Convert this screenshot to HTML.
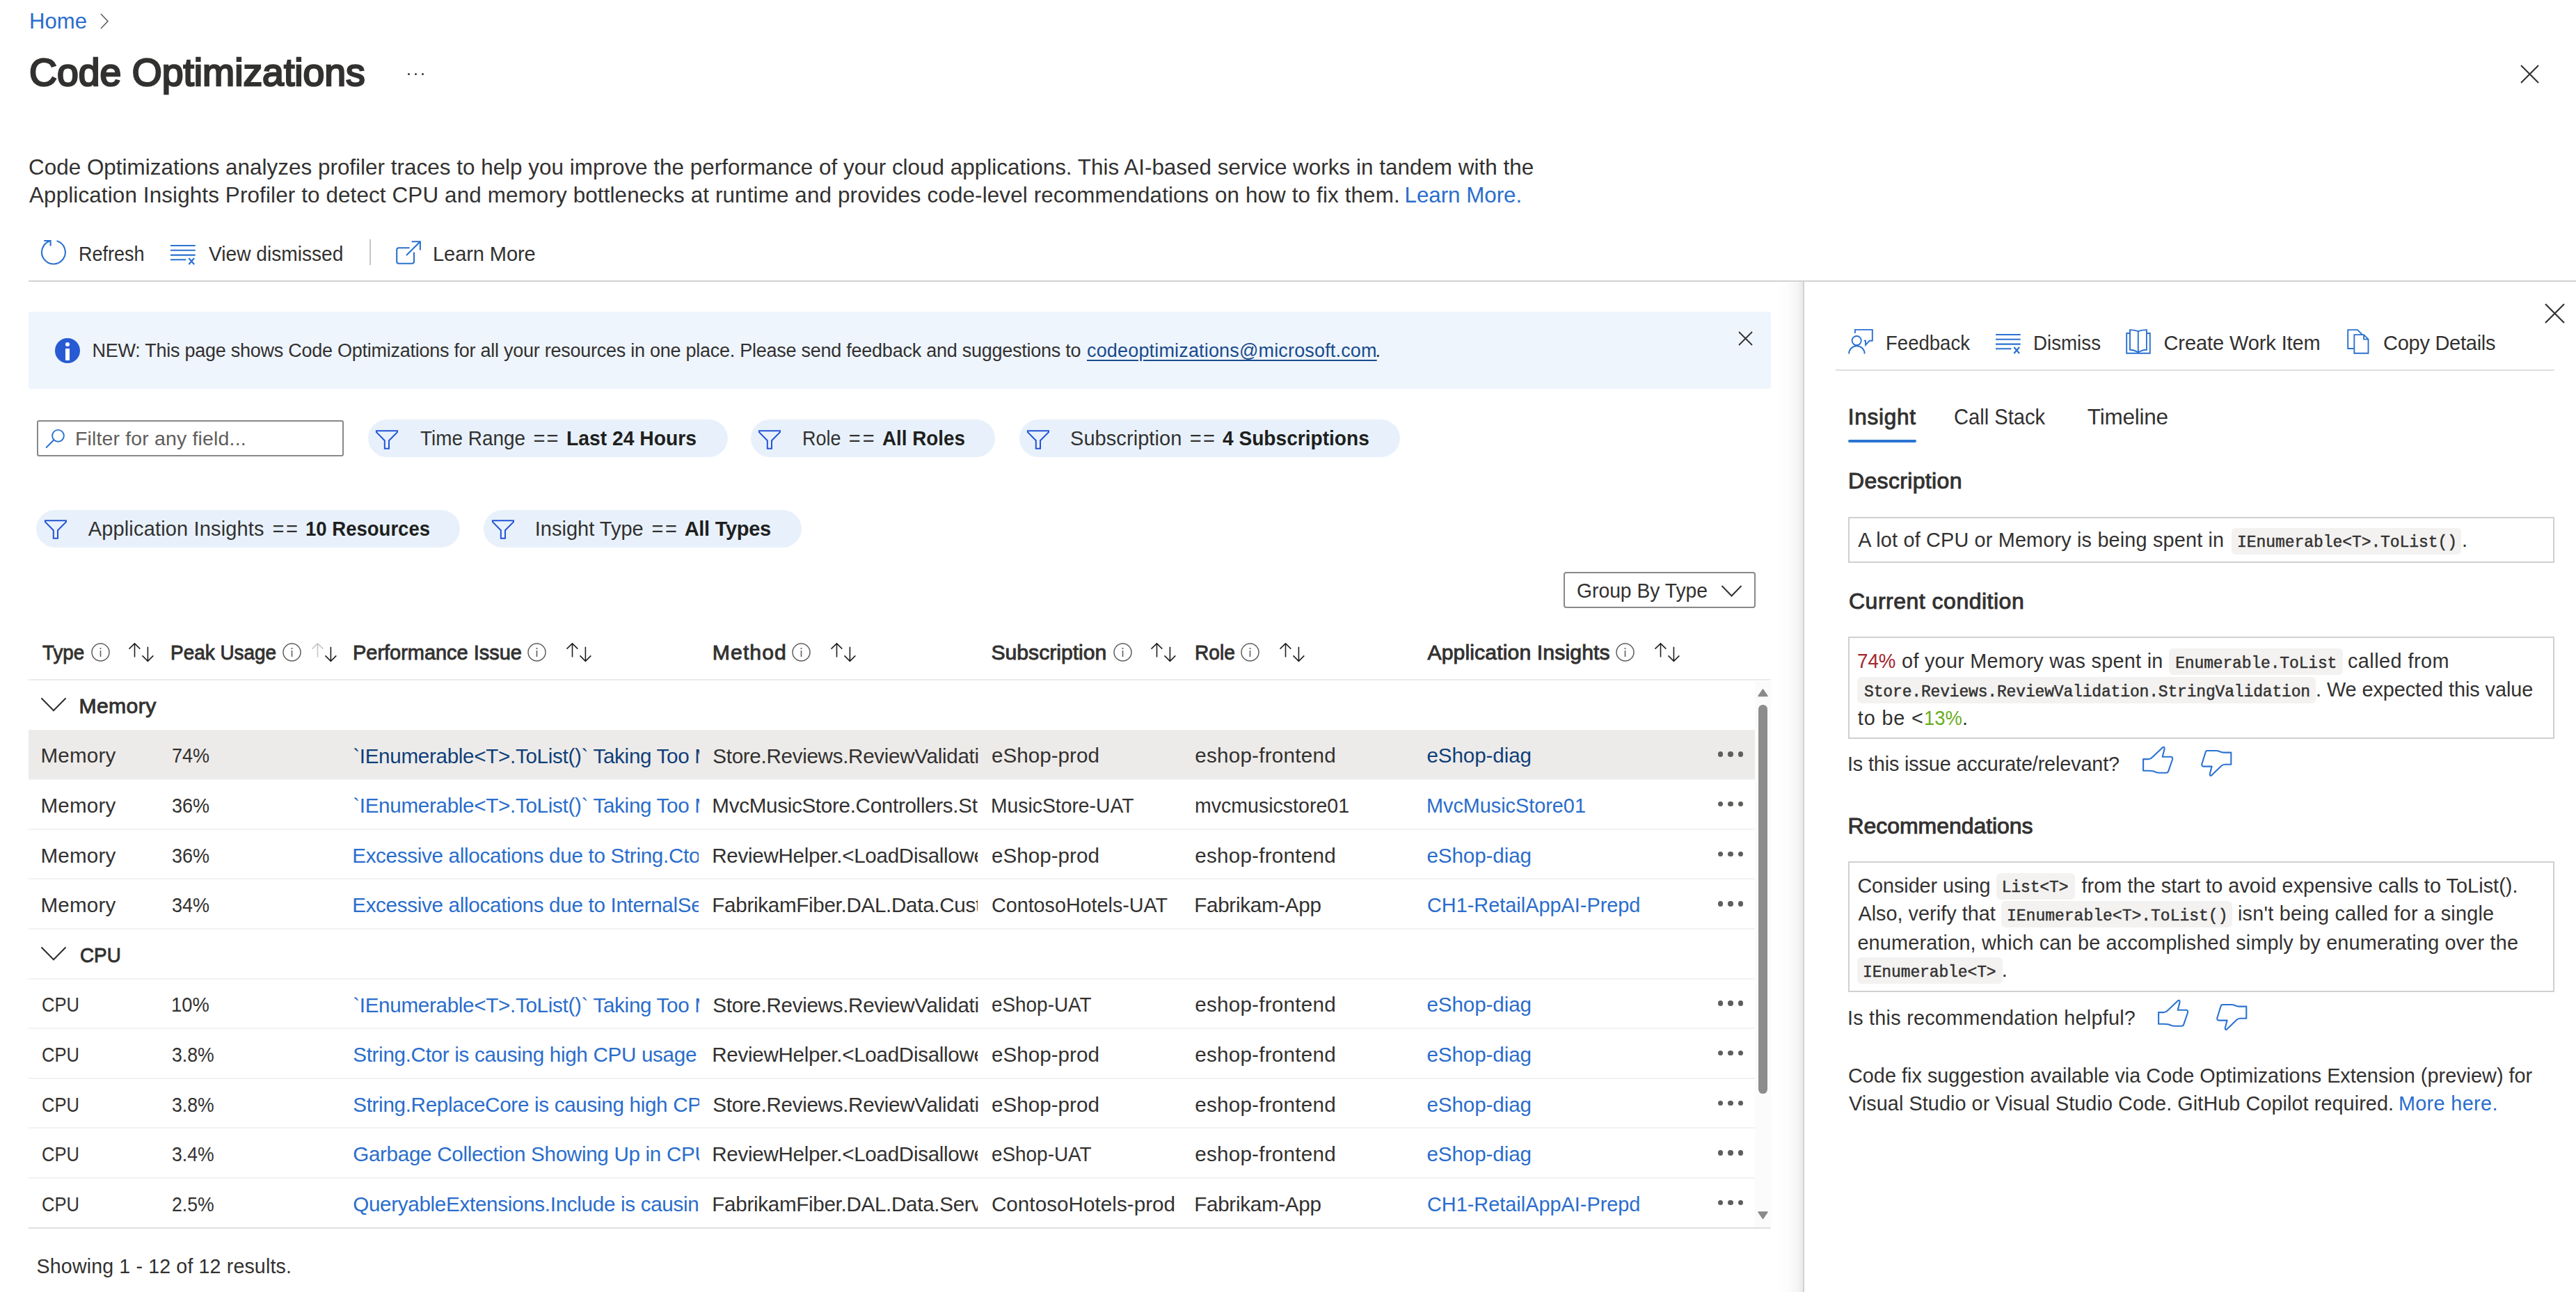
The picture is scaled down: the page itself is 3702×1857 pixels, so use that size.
<!DOCTYPE html><html><head><meta charset="utf-8"><title>Code Optimizations</title><style>
html,body{margin:0;padding:0;background:#fff;}
body{width:3702px;height:1857px;overflow:hidden;position:relative;font-family:"Liberation Sans",sans-serif;}
.t{position:absolute;white-space:pre;line-height:0;}
svg{overflow:visible}
</style></head><body>
<svg style="position:absolute;left:142.0px;top:18.0px;" width="16.0" height="25.0" viewBox="0 0 16 25" preserveAspectRatio="none"><path d="M3 2 L13 12.5 L3 23" fill="none" stroke="#605e5c" stroke-width="1.6"/></svg>
<div style="position:absolute;left:585.6px;top:104.5px;width:3.6px;height:3.6px;border-radius:50%;background:#323130"></div>
<div style="position:absolute;left:595.7px;top:104.5px;width:3.6px;height:3.6px;border-radius:50%;background:#323130"></div>
<div style="position:absolute;left:605.8px;top:104.5px;width:3.6px;height:3.6px;border-radius:50%;background:#323130"></div>
<svg style="position:absolute;left:3620.0px;top:91.0px;" width="31.0" height="31.0" viewBox="0 0 31 31" preserveAspectRatio="none"><path d="M3 3 L28 28 M28 3 L3 28" stroke="#323130" stroke-width="2.1" fill="none"/></svg>
<svg style="position:absolute;left:57.0px;top:342.0px;" width="40.0" height="40.0" viewBox="0 0 40 40" preserveAspectRatio="none"><path d="M24.6 4.3 A16.9 16.9 0 1 1 14.6 4.5" fill="none" stroke="#2b72d0" stroke-width="2.1"/><path d="M6.2 4 H15.6 V11.5" fill="none" stroke="#2b72d0" stroke-width="2.1"/></svg>
<svg style="position:absolute;left:244.0px;top:349.7px;" width="39.0" height="33.0" viewBox="0 0 39 33" preserveAspectRatio="none"><path d="M1 3 H36.7 M1 9.8 H36.7 M1 16.6 H36.7 M1 23.2 H23.4" stroke="#2b72d0" stroke-width="2.1" fill="none"/><path d="M27.3 21.1 L35.1 30 M35.1 21.1 L27.3 30" stroke="#2b72d0" stroke-width="2.2" fill="none"/></svg>
<div style="position:absolute;left:531.0px;top:343.5px;width:2.0px;height:37.2px;background:#c8c6c4;"></div>
<svg style="position:absolute;left:567.0px;top:344.0px;" width="40.0" height="38.0" viewBox="0 0 40 38" preserveAspectRatio="none"><path d="M21.6 12.2 H6.2 Q3.2 12.2 3.2 15.2 V31.8 Q3.2 34.8 6.2 34.8 H25 Q28 34.8 28 31.8 V18.5" fill="none" stroke="#2b72d0" stroke-width="2.1"/><path d="M17 23 L36.6 3.4 M24.7 3.3 H36.9 V15.4" fill="none" stroke="#2b72d0" stroke-width="2.1"/></svg>
<div style="position:absolute;left:41.0px;top:403.0px;width:3661.0px;height:2.0px;background:#d2d2d2;"></div>
<div style="position:absolute;left:41.2px;top:448.0px;width:2503.8px;height:111.3px;background:#eff5fd;border-radius:4px"></div>
<div style="position:absolute;left:79px;top:486px;width:36px;height:36px;border-radius:50%;background:#285bd3"></div>
<div style="position:absolute;left:94.1px;top:501.4px;width:5.7px;height:16.4px;background:#ffffff;"></div>
<div style="position:absolute;left:93.7px;top:491.9px;width:6.6px;height:6.6px;border-radius:50%;background:#fff"></div>
<svg style="position:absolute;left:2497.0px;top:475.0px;" width="23.0" height="23.0" viewBox="0 0 23 23" preserveAspectRatio="none"><path d="M2 2 L21 21 M21 2 L2 21" stroke="#323130" stroke-width="1.8" fill="none"/></svg>
<div style="position:absolute;left:53px;top:603.5px;width:441.3px;height:52.5px;box-sizing:border-box;border:2px solid #8a8886;border-radius:3px;background:#fff"></div>
<svg style="position:absolute;left:65.0px;top:615.0px;" width="30.0" height="30.0" viewBox="0 0 30 30" preserveAspectRatio="none"><circle cx="18.5" cy="11.3" r="8.4" fill="none" stroke="#2b72d0" stroke-width="1.9"/><path d="M11.9 17.8 L1.7 28" stroke="#2b72d0" stroke-width="2.0" fill="none" stroke-linecap="round"/></svg>
<div style="position:absolute;left:529.0px;top:603.0px;width:516.8px;height:54.0px;background:#e8f1fb;border-radius:27px"></div>
<svg style="position:absolute;left:540.0px;top:617.7px;" width="32.0" height="28.5" viewBox="0 0 32 28.5" preserveAspectRatio="none"><path d="M0.9 3.2 V1.3 H31 V3.2 L19 15.2 V26.7 H12.8 V15.2 Z" fill="none" stroke="#2454d6" stroke-width="2.0" stroke-linejoin="miter"/></svg>
<div style="position:absolute;left:1079.0px;top:603.0px;width:351.4px;height:54.0px;background:#e8f1fb;border-radius:27px"></div>
<svg style="position:absolute;left:1090.0px;top:617.7px;" width="32.0" height="28.5" viewBox="0 0 32 28.5" preserveAspectRatio="none"><path d="M0.9 3.2 V1.3 H31 V3.2 L19 15.2 V26.7 H12.8 V15.2 Z" fill="none" stroke="#2454d6" stroke-width="2.0" stroke-linejoin="miter"/></svg>
<div style="position:absolute;left:1465.4px;top:603.0px;width:546.2px;height:54.0px;background:#e8f1fb;border-radius:27px"></div>
<svg style="position:absolute;left:1476.0px;top:617.7px;" width="32.0" height="28.5" viewBox="0 0 32 28.5" preserveAspectRatio="none"><path d="M0.9 3.2 V1.3 H31 V3.2 L19 15.2 V26.7 H12.8 V15.2 Z" fill="none" stroke="#2454d6" stroke-width="2.0" stroke-linejoin="miter"/></svg>
<div style="position:absolute;left:52.2px;top:732.6px;width:609.2px;height:54.0px;background:#e8f1fb;border-radius:27px"></div>
<svg style="position:absolute;left:63.8px;top:747.3px;" width="32.0" height="28.5" viewBox="0 0 32 28.5" preserveAspectRatio="none"><path d="M0.9 3.2 V1.3 H31 V3.2 L19 15.2 V26.7 H12.8 V15.2 Z" fill="none" stroke="#2454d6" stroke-width="2.0" stroke-linejoin="miter"/></svg>
<div style="position:absolute;left:695.4px;top:732.6px;width:456.4px;height:54.0px;background:#e8f1fb;border-radius:27px"></div>
<svg style="position:absolute;left:706.6px;top:747.3px;" width="32.0" height="28.5" viewBox="0 0 32 28.5" preserveAspectRatio="none"><path d="M0.9 3.2 V1.3 H31 V3.2 L19 15.2 V26.7 H12.8 V15.2 Z" fill="none" stroke="#2454d6" stroke-width="2.0" stroke-linejoin="miter"/></svg>
<div style="position:absolute;left:2246.6px;top:821.7px;width:276.7px;height:52.5px;box-sizing:border-box;border:2px solid #8a8886;border-radius:4px;background:#fff"></div>
<svg style="position:absolute;left:2473.0px;top:840.0px;" width="31.0" height="19.0" viewBox="0 0 31 19" preserveAspectRatio="none"><path d="M1.5 2 L15.5 16.5 L29.5 2" fill="none" stroke="#323130" stroke-width="2"/></svg>
<svg style="position:absolute;left:130.9px;top:924.0px;" width="27.0" height="27.0" viewBox="0 0 27 27" preserveAspectRatio="none"><circle cx="13.5" cy="13.5" r="12.5" fill="none" stroke="#605e5c" stroke-width="1.5"/><rect x="12.7" y="11" width="1.6" height="9" fill="#605e5c"/><circle cx="13.5" cy="8.1" r="1.1" fill="#605e5c"/></svg>
<svg style="position:absolute;left:184.0px;top:923.5px;" width="37.0" height="28.0" viewBox="0 0 37 28" preserveAspectRatio="none"><path d="M9.5 1 V20.4 M1.5 8.6 L9.5 0.9 L17.3 8.6" fill="none" stroke="#201f1e" stroke-width="1.6"/><path d="M28.4 5.8 V26.4 M20.5 18.4 L28.4 26.4 L36.3 18.4" fill="none" stroke="#201f1e" stroke-width="1.6"/></svg>
<svg style="position:absolute;left:406.4px;top:924.0px;" width="27.0" height="27.0" viewBox="0 0 27 27" preserveAspectRatio="none"><circle cx="13.5" cy="13.5" r="12.5" fill="none" stroke="#605e5c" stroke-width="1.5"/><rect x="12.7" y="11" width="1.6" height="9" fill="#605e5c"/><circle cx="13.5" cy="8.1" r="1.1" fill="#605e5c"/></svg>
<svg style="position:absolute;left:447.0px;top:923.5px;" width="37.0" height="28.0" viewBox="0 0 37 28" preserveAspectRatio="none"><path d="M9.5 1 V20.4 M1.5 8.6 L9.5 0.9 L17.3 8.6" fill="none" stroke="#c8c6c4" stroke-width="1.6"/><path d="M28.4 5.8 V26.4 M20.5 18.4 L28.4 26.4 L36.3 18.4" fill="none" stroke="#201f1e" stroke-width="1.6"/></svg>
<svg style="position:absolute;left:758.4px;top:924.0px;" width="27.0" height="27.0" viewBox="0 0 27 27" preserveAspectRatio="none"><circle cx="13.5" cy="13.5" r="12.5" fill="none" stroke="#605e5c" stroke-width="1.5"/><rect x="12.7" y="11" width="1.6" height="9" fill="#605e5c"/><circle cx="13.5" cy="8.1" r="1.1" fill="#605e5c"/></svg>
<svg style="position:absolute;left:813.0px;top:923.5px;" width="37.0" height="28.0" viewBox="0 0 37 28" preserveAspectRatio="none"><path d="M9.5 1 V20.4 M1.5 8.6 L9.5 0.9 L17.3 8.6" fill="none" stroke="#201f1e" stroke-width="1.6"/><path d="M28.4 5.8 V26.4 M20.5 18.4 L28.4 26.4 L36.3 18.4" fill="none" stroke="#201f1e" stroke-width="1.6"/></svg>
<svg style="position:absolute;left:1138.4px;top:924.0px;" width="27.0" height="27.0" viewBox="0 0 27 27" preserveAspectRatio="none"><circle cx="13.5" cy="13.5" r="12.5" fill="none" stroke="#605e5c" stroke-width="1.5"/><rect x="12.7" y="11" width="1.6" height="9" fill="#605e5c"/><circle cx="13.5" cy="8.1" r="1.1" fill="#605e5c"/></svg>
<svg style="position:absolute;left:1192.5px;top:923.5px;" width="37.0" height="28.0" viewBox="0 0 37 28" preserveAspectRatio="none"><path d="M9.5 1 V20.4 M1.5 8.6 L9.5 0.9 L17.3 8.6" fill="none" stroke="#201f1e" stroke-width="1.6"/><path d="M28.4 5.8 V26.4 M20.5 18.4 L28.4 26.4 L36.3 18.4" fill="none" stroke="#201f1e" stroke-width="1.6"/></svg>
<svg style="position:absolute;left:1599.9px;top:924.0px;" width="27.0" height="27.0" viewBox="0 0 27 27" preserveAspectRatio="none"><circle cx="13.5" cy="13.5" r="12.5" fill="none" stroke="#605e5c" stroke-width="1.5"/><rect x="12.7" y="11" width="1.6" height="9" fill="#605e5c"/><circle cx="13.5" cy="8.1" r="1.1" fill="#605e5c"/></svg>
<svg style="position:absolute;left:1653.0px;top:923.5px;" width="37.0" height="28.0" viewBox="0 0 37 28" preserveAspectRatio="none"><path d="M9.5 1 V20.4 M1.5 8.6 L9.5 0.9 L17.3 8.6" fill="none" stroke="#201f1e" stroke-width="1.6"/><path d="M28.4 5.8 V26.4 M20.5 18.4 L28.4 26.4 L36.3 18.4" fill="none" stroke="#201f1e" stroke-width="1.6"/></svg>
<svg style="position:absolute;left:1783.4px;top:924.0px;" width="27.0" height="27.0" viewBox="0 0 27 27" preserveAspectRatio="none"><circle cx="13.5" cy="13.5" r="12.5" fill="none" stroke="#605e5c" stroke-width="1.5"/><rect x="12.7" y="11" width="1.6" height="9" fill="#605e5c"/><circle cx="13.5" cy="8.1" r="1.1" fill="#605e5c"/></svg>
<svg style="position:absolute;left:1837.5px;top:923.5px;" width="37.0" height="28.0" viewBox="0 0 37 28" preserveAspectRatio="none"><path d="M9.5 1 V20.4 M1.5 8.6 L9.5 0.9 L17.3 8.6" fill="none" stroke="#201f1e" stroke-width="1.6"/><path d="M28.4 5.8 V26.4 M20.5 18.4 L28.4 26.4 L36.3 18.4" fill="none" stroke="#201f1e" stroke-width="1.6"/></svg>
<svg style="position:absolute;left:2322.3px;top:924.0px;" width="27.0" height="27.0" viewBox="0 0 27 27" preserveAspectRatio="none"><circle cx="13.5" cy="13.5" r="12.5" fill="none" stroke="#605e5c" stroke-width="1.5"/><rect x="12.7" y="11" width="1.6" height="9" fill="#605e5c"/><circle cx="13.5" cy="8.1" r="1.1" fill="#605e5c"/></svg>
<svg style="position:absolute;left:2376.5px;top:923.5px;" width="37.0" height="28.0" viewBox="0 0 37 28" preserveAspectRatio="none"><path d="M9.5 1 V20.4 M1.5 8.6 L9.5 0.9 L17.3 8.6" fill="none" stroke="#201f1e" stroke-width="1.6"/><path d="M28.4 5.8 V26.4 M20.5 18.4 L28.4 26.4 L36.3 18.4" fill="none" stroke="#201f1e" stroke-width="1.6"/></svg>
<div style="position:absolute;left:41.0px;top:976.0px;width:2504.0px;height:2.0px;background:#edebe9;"></div>
<svg style="position:absolute;left:58.0px;top:1002.2px;" width="38.0" height="21.4" viewBox="0 0 38 21.4" preserveAspectRatio="none"><path d="M1.5 1.5 L19 19.2 L36.5 1.5" fill="none" stroke="#323130" stroke-width="2.1"/></svg>
<div style="position:absolute;left:41.0px;top:1048.6px;width:2481.0px;height:71.6px;background:#edebe9;"></div>
<div style="position:absolute;left:2468.9px;top:1080.4px;width:7.4px;height:7.4px;border-radius:50%;background:#605e5c"></div>
<div style="position:absolute;left:2483.3px;top:1080.4px;width:7.4px;height:7.4px;border-radius:50%;background:#605e5c"></div>
<div style="position:absolute;left:2497.6px;top:1080.4px;width:7.4px;height:7.4px;border-radius:50%;background:#605e5c"></div>
<div style="position:absolute;left:41.0px;top:1119.2px;width:2481.0px;height:2.0px;background:#f3f2f1;"></div>
<div style="position:absolute;left:2468.9px;top:1152.0px;width:7.4px;height:7.4px;border-radius:50%;background:#605e5c"></div>
<div style="position:absolute;left:2483.3px;top:1152.0px;width:7.4px;height:7.4px;border-radius:50%;background:#605e5c"></div>
<div style="position:absolute;left:2497.6px;top:1152.0px;width:7.4px;height:7.4px;border-radius:50%;background:#605e5c"></div>
<div style="position:absolute;left:41.0px;top:1190.8px;width:2481.0px;height:2.0px;background:#f3f2f1;"></div>
<div style="position:absolute;left:2468.9px;top:1223.6px;width:7.4px;height:7.4px;border-radius:50%;background:#605e5c"></div>
<div style="position:absolute;left:2483.3px;top:1223.6px;width:7.4px;height:7.4px;border-radius:50%;background:#605e5c"></div>
<div style="position:absolute;left:2497.6px;top:1223.6px;width:7.4px;height:7.4px;border-radius:50%;background:#605e5c"></div>
<div style="position:absolute;left:41.0px;top:1262.4px;width:2481.0px;height:2.0px;background:#f3f2f1;"></div>
<div style="position:absolute;left:2468.9px;top:1295.2px;width:7.4px;height:7.4px;border-radius:50%;background:#605e5c"></div>
<div style="position:absolute;left:2483.3px;top:1295.2px;width:7.4px;height:7.4px;border-radius:50%;background:#605e5c"></div>
<div style="position:absolute;left:2497.6px;top:1295.2px;width:7.4px;height:7.4px;border-radius:50%;background:#605e5c"></div>
<div style="position:absolute;left:41.0px;top:1334.0px;width:2481.0px;height:2.0px;background:#f3f2f1;"></div>
<svg style="position:absolute;left:58.0px;top:1360.2px;" width="38.0" height="21.4" viewBox="0 0 38 21.4" preserveAspectRatio="none"><path d="M1.5 1.5 L19 19.2 L36.5 1.5" fill="none" stroke="#323130" stroke-width="2.1"/></svg>
<div style="position:absolute;left:41.0px;top:1405.6px;width:2481.0px;height:2.0px;background:#f3f2f1;"></div>
<div style="position:absolute;left:2468.9px;top:1438.4px;width:7.4px;height:7.4px;border-radius:50%;background:#605e5c"></div>
<div style="position:absolute;left:2483.3px;top:1438.4px;width:7.4px;height:7.4px;border-radius:50%;background:#605e5c"></div>
<div style="position:absolute;left:2497.6px;top:1438.4px;width:7.4px;height:7.4px;border-radius:50%;background:#605e5c"></div>
<div style="position:absolute;left:41.0px;top:1477.2px;width:2481.0px;height:2.0px;background:#f3f2f1;"></div>
<div style="position:absolute;left:2468.9px;top:1510.0px;width:7.4px;height:7.4px;border-radius:50%;background:#605e5c"></div>
<div style="position:absolute;left:2483.3px;top:1510.0px;width:7.4px;height:7.4px;border-radius:50%;background:#605e5c"></div>
<div style="position:absolute;left:2497.6px;top:1510.0px;width:7.4px;height:7.4px;border-radius:50%;background:#605e5c"></div>
<div style="position:absolute;left:41.0px;top:1548.8px;width:2481.0px;height:2.0px;background:#f3f2f1;"></div>
<div style="position:absolute;left:2468.9px;top:1581.6px;width:7.4px;height:7.4px;border-radius:50%;background:#605e5c"></div>
<div style="position:absolute;left:2483.3px;top:1581.6px;width:7.4px;height:7.4px;border-radius:50%;background:#605e5c"></div>
<div style="position:absolute;left:2497.6px;top:1581.6px;width:7.4px;height:7.4px;border-radius:50%;background:#605e5c"></div>
<div style="position:absolute;left:41.0px;top:1620.4px;width:2481.0px;height:2.0px;background:#f3f2f1;"></div>
<div style="position:absolute;left:2468.9px;top:1653.2px;width:7.4px;height:7.4px;border-radius:50%;background:#605e5c"></div>
<div style="position:absolute;left:2483.3px;top:1653.2px;width:7.4px;height:7.4px;border-radius:50%;background:#605e5c"></div>
<div style="position:absolute;left:2497.6px;top:1653.2px;width:7.4px;height:7.4px;border-radius:50%;background:#605e5c"></div>
<div style="position:absolute;left:41.0px;top:1692.0px;width:2481.0px;height:2.0px;background:#f3f2f1;"></div>
<div style="position:absolute;left:2468.9px;top:1724.8px;width:7.4px;height:7.4px;border-radius:50%;background:#605e5c"></div>
<div style="position:absolute;left:2483.3px;top:1724.8px;width:7.4px;height:7.4px;border-radius:50%;background:#605e5c"></div>
<div style="position:absolute;left:2497.6px;top:1724.8px;width:7.4px;height:7.4px;border-radius:50%;background:#605e5c"></div>
<div style="position:absolute;left:41.0px;top:1764.0px;width:2504.0px;height:2.0px;background:#e1dfdd;"></div>
<div style="position:absolute;left:2522.0px;top:978.5px;width:23.0px;height:785.5px;background:#fbfbfb;"></div>
<svg style="position:absolute;left:2526.0px;top:990.0px;" width="15.0" height="11.5" viewBox="0 0 15 11.5" preserveAspectRatio="none"><path d="M7.5 1 L14 10.5 H1 Z" fill="#8a8a8a" stroke="#8a8a8a" stroke-width="1.5" stroke-linejoin="round"/></svg>
<svg style="position:absolute;left:2526.0px;top:1741.0px;" width="15.0" height="11.5" viewBox="0 0 15 11.5" preserveAspectRatio="none"><path d="M7.5 10.5 L14 1 H1 Z" fill="#8a8a8a" stroke="#8a8a8a" stroke-width="1.5" stroke-linejoin="round"/></svg>
<div style="position:absolute;left:2527.2px;top:1013.0px;width:12.8px;height:558.6px;background:#8c8c8c;border-radius:6.4px"></div>
<div style="position:absolute;left:2552px;top:405px;width:39px;height:1452px;background:linear-gradient(to right, rgba(0,0,0,0) 0%, rgba(0,0,0,0.012) 45%, rgba(0,0,0,0.04) 80%, rgba(0,0,0,0.085) 100%)"></div>
<div style="position:absolute;left:2592.0px;top:405.0px;width:1110.0px;height:1452.0px;background:#ffffff;"></div>
<div style="position:absolute;left:2591.0px;top:405.0px;width:2.0px;height:1452.0px;background:#d2d2d2;"></div>
<svg style="position:absolute;left:3656.0px;top:435.0px;" width="31.0" height="31.0" viewBox="0 0 31 31" preserveAspectRatio="none"><path d="M2 2 L29 29 M29 2 L2 29" stroke="#323130" stroke-width="2.2" fill="none"/></svg>
<svg style="position:absolute;left:2655.0px;top:472.0px;" width="39.0" height="38.0" viewBox="0 0 39 38" preserveAspectRatio="none"><circle cx="13.2" cy="17.6" r="6.6" fill="none" stroke="#2b72d0" stroke-width="1.9"/><path d="M2.1 36.5 A11.3 11.3 0 0 1 24.7 36.5" fill="none" stroke="#2b72d0" stroke-width="1.9"/><path d="M10.9 7 V1.9 H35.8 V17.8 H31.7 L26 23.8 V17.6 H23.7" fill="none" stroke="#2b72d0" stroke-width="1.9"/></svg>
<svg style="position:absolute;left:2867.2px;top:477.8px;" width="39.0" height="33.0" viewBox="0 0 39 33" preserveAspectRatio="none"><path d="M1 3 H36.7 M1 9.8 H36.7 M1 16.6 H36.7 M1 23.2 H23.4" stroke="#2b72d0" stroke-width="2.1" fill="none"/><path d="M27.3 21.1 L35.1 30 M35.1 21.1 L27.3 30" stroke="#2b72d0" stroke-width="2.2" fill="none"/></svg>
<svg style="position:absolute;left:3054.0px;top:472.0px;" width="38.0" height="38.0" viewBox="0 0 38 38" preserveAspectRatio="none"><path d="M7 7 H2.2 V35.7 H35.8 V7 H30.9" fill="none" stroke="#2b72d0" stroke-width="1.9"/><path d="M7 2.1 Q13 2.1 18.8 4.2 Q24.6 2.1 30.9 2.1 V30.7 Q24.6 30.7 18.8 34.5 Q13 30.7 7 30.7 Z M18.8 4.2 V34.5" fill="none" stroke="#2b72d0" stroke-width="1.9"/></svg>
<svg style="position:absolute;left:3372.0px;top:472.0px;" width="34.0" height="38.0" viewBox="0 0 34 38" preserveAspectRatio="none"><path d="M10.5 29 H2.2 V2.1 H16 L22.8 8.9" fill="none" stroke="#2b72d0" stroke-width="1.9"/><path d="M11.3 9.1 H25.1 L31.5 15.6 V35.7 H11.3 Z M25.1 9.1 V15.6 H31.5" fill="none" stroke="#2b72d0" stroke-width="1.9"/></svg>
<div style="position:absolute;left:2638.0px;top:531.0px;width:1033.0px;height:2.0px;background:#e1dfdd;"></div>
<div style="position:absolute;left:2656.0px;top:632.2px;width:98.0px;height:4.2px;background:#2b74d2;border-radius:2px"></div>
<div style="position:absolute;left:2656px;top:742.5px;width:1015px;height:66.0px;box-sizing:border-box;border:2px solid #d2d0ce;background:#fff"></div>
<div style="position:absolute;left:3207.0px;top:758.8px;width:330.3px;height:38.0px;background:#f3f2f1;border-radius:6px"></div>
<div style="position:absolute;left:2656px;top:915px;width:1015px;height:147px;box-sizing:border-box;border:2px solid #d2d0ce;background:#fff"></div>
<div style="position:absolute;left:3117.2px;top:932.4px;width:249.4px;height:38.0px;background:#f3f2f1;border-radius:6px"></div>
<div style="position:absolute;left:2669.2px;top:973.2px;width:659.1px;height:38.0px;background:#f3f2f1;border-radius:6px"></div>
<svg style="position:absolute;left:3077.5px;top:1071.5px;" width="46.0" height="40.0" viewBox="0 0 46 40" preserveAspectRatio="none"><path d="M2.1 19.1 H9.5 Q12.5 19.1 15 16.5 L29.5 2.7 Q32.8 0.3 32.6 4.5 L29.7 15.8 H42 Q44.8 16.3 44 19.5 L38.1 36.8 Q37.2 38.8 35.3 38.8 H25 Q21.5 38.8 17 36.5 Q13 35.7 9.5 35.7 H2.1 Z" fill="none" stroke="#2b72d0" stroke-width="2.1" stroke-linejoin="round"/></svg>
<svg style="position:absolute;left:3163.0px;top:1077.0px;" width="46.0" height="40.0" viewBox="0 0 46 40" preserveAspectRatio="none"><path d="M43.3 4.6 H33 Q30 4.6 26.5 3 Q24.5 2 22 2 H9 Q7.2 2 6.5 4.5 L1.3 21.2 Q0.7 24.6 4.5 24.6 H15.6 L12.8 35.6 Q12.6 38.6 14.8 37.8 L29.7 23.5 Q32 21.8 35 21.8 H43.3 Z" fill="none" stroke="#2b72d0" stroke-width="2.1" stroke-linejoin="round"/></svg>
<div style="position:absolute;left:2656px;top:1237.6px;width:1015px;height:188.60000000000014px;box-sizing:border-box;border:2px solid #d2d0ce;background:#fff"></div>
<div style="position:absolute;left:2869.4px;top:1255.0px;width:112.2px;height:38.0px;background:#f3f2f1;border-radius:6px"></div>
<div style="position:absolute;left:2876.3px;top:1295.2px;width:331.3px;height:38.0px;background:#f3f2f1;border-radius:6px"></div>
<div style="position:absolute;left:2669.2px;top:1376.3px;width:208.5px;height:38.0px;background:#f3f2f1;border-radius:6px"></div>
<svg style="position:absolute;left:3100.2px;top:1436.1px;" width="46.0" height="40.0" viewBox="0 0 46 40" preserveAspectRatio="none"><path d="M2.1 19.1 H9.5 Q12.5 19.1 15 16.5 L29.5 2.7 Q32.8 0.3 32.6 4.5 L29.7 15.8 H42 Q44.8 16.3 44 19.5 L38.1 36.8 Q37.2 38.8 35.3 38.8 H25 Q21.5 38.8 17 36.5 Q13 35.7 9.5 35.7 H2.1 Z" fill="none" stroke="#2b72d0" stroke-width="2.1" stroke-linejoin="round"/></svg>
<svg style="position:absolute;left:3185.4px;top:1442.0px;" width="46.0" height="40.0" viewBox="0 0 46 40" preserveAspectRatio="none"><path d="M43.3 4.6 H33 Q30 4.6 26.5 3 Q24.5 2 22 2 H9 Q7.2 2 6.5 4.5 L1.3 21.2 Q0.7 24.6 4.5 24.6 H15.6 L12.8 35.6 Q12.6 38.6 14.8 37.8 L29.7 23.5 Q32 21.8 35 21.8 H43.3 Z" fill="none" stroke="#2b72d0" stroke-width="2.1" stroke-linejoin="round"/></svg>
<div id="t0" class="t" style="left:41.52px;top:30.09px;font-family:'Liberation Sans', sans-serif;font-size:31.50px;font-weight:400;color:#2a6dcc;transform:scaleX(0.9876);transform-origin:0 0;">Home</div>
<div id="t1" class="t" style="left:41.97px;top:104.10px;font-family:'Liberation Sans', sans-serif;font-size:56.00px;font-weight:400;color:#323130;-webkit-text-stroke:2.52px #323130;transform:scaleX(0.9879);transform-origin:0 0;">Code Optimizations</div>
<div id="t2" class="t" style="left:41.00px;top:241.12px;font-family:'Liberation Sans', sans-serif;font-size:31.40px;font-weight:400;color:#323130;letter-spacing:0.024px;">Code Optimizations analyzes profiler traces to help you improve the performance of your cloud applications. This AI-based service works in tandem with the</div>
<div id="t3" class="t" style="left:42.00px;top:281.12px;font-family:'Liberation Sans', sans-serif;font-size:31.40px;font-weight:400;color:#323130;letter-spacing:0.127px;">Application Insights Profiler to detect CPU and memory bottlenecks at runtime and provides code-level recommendations on how to fix them.</div>
<div id="t4" class="t" style="left:2018.50px;top:281.12px;font-family:'Liberation Sans', sans-serif;font-size:31.40px;font-weight:400;color:#2a6dcc;letter-spacing:-0.052px;">Learn More.</div>
<div id="t5" class="t" style="left:113.24px;top:364.75px;font-family:'Liberation Sans', sans-serif;font-size:29.00px;font-weight:400;color:#323130;transform:scaleX(0.9318);transform-origin:0 0;">Refresh</div>
<div id="t6" class="t" style="left:299.70px;top:364.75px;font-family:'Liberation Sans', sans-serif;font-size:29.00px;font-weight:400;color:#323130;transform:scaleX(0.9703);transform-origin:0 0;">View dismissed</div>
<div id="t7" class="t" style="left:622.00px;top:364.75px;font-family:'Liberation Sans', sans-serif;font-size:29.00px;font-weight:400;color:#323130;letter-spacing:-0.063px;">Learn More</div>
<div id="t8" class="t" style="left:132.40px;top:504.44px;font-family:'Liberation Sans', sans-serif;font-size:27.00px;font-weight:400;color:#323130;letter-spacing:-0.254px;">NEW: This page shows Code Optimizations for all your resources in one place. Please send feedback and suggestions to</div>
<div id="t9" class="t" style="left:1562.00px;top:504.44px;font-family:'Liberation Sans', sans-serif;font-size:27.00px;font-weight:400;color:#1a4b8c;letter-spacing:0.165px;text-decoration:underline;text-underline-offset:4px;text-decoration-thickness:1.5px;">codeoptimizations@microsoft.com</div>
<div id="t10" class="t" style="left:1976.50px;top:504.44px;font-family:'Liberation Sans', sans-serif;font-size:27.00px;font-weight:400;color:#323130;">.</div>
<div id="t11" class="t" style="left:108.00px;top:629.72px;font-family:'Liberation Sans', sans-serif;font-size:28.50px;font-weight:400;color:#605e5c;letter-spacing:0.149px;">Filter for any field...</div>
<div id="t12" class="t" style="left:604.00px;top:629.95px;font-family:'Liberation Sans', sans-serif;font-size:29.00px;font-weight:400;color:#323130;transform:scaleX(0.9624);transform-origin:0 0;">Time Range</div>
<div id="t13" class="t" style="left:766.40px;top:629.95px;font-family:'Liberation Sans', sans-serif;font-size:29.00px;font-weight:400;color:#323130;letter-spacing:2.264px;">==</div>
<div id="t14" class="t" style="left:814.02px;top:629.95px;font-family:'Liberation Sans', sans-serif;font-size:29.00px;font-weight:700;color:#201f1e;transform:scaleX(0.9754);transform-origin:0 0;">Last 24 Hours</div>
<div id="t15" class="t" style="left:1152.94px;top:629.95px;font-family:'Liberation Sans', sans-serif;font-size:29.00px;font-weight:400;color:#323130;transform:scaleX(0.9290);transform-origin:0 0;">Role</div>
<div id="t16" class="t" style="left:1219.80px;top:629.95px;font-family:'Liberation Sans', sans-serif;font-size:29.00px;font-weight:400;color:#323130;letter-spacing:2.964px;">==</div>
<div id="t17" class="t" style="left:1268.00px;top:629.95px;font-family:'Liberation Sans', sans-serif;font-size:29.00px;font-weight:700;color:#201f1e;transform:scaleX(0.9581);transform-origin:0 0;">All Roles</div>
<div id="t18" class="t" style="left:1538.00px;top:629.95px;font-family:'Liberation Sans', sans-serif;font-size:29.00px;font-weight:400;color:#323130;letter-spacing:0.068px;">Subscription</div>
<div id="t19" class="t" style="left:1709.70px;top:629.95px;font-family:'Liberation Sans', sans-serif;font-size:29.00px;font-weight:400;color:#323130;letter-spacing:2.264px;">==</div>
<div id="t20" class="t" style="left:1757.30px;top:629.95px;font-family:'Liberation Sans', sans-serif;font-size:29.00px;font-weight:700;color:#201f1e;transform:scaleX(0.9690);transform-origin:0 0;">4 Subscriptions</div>
<div id="t21" class="t" style="left:126.70px;top:759.55px;font-family:'Liberation Sans', sans-serif;font-size:29.00px;font-weight:400;color:#323130;letter-spacing:0.159px;">Application Insights</div>
<div id="t22" class="t" style="left:391.60px;top:759.55px;font-family:'Liberation Sans', sans-serif;font-size:29.00px;font-weight:400;color:#323130;letter-spacing:2.464px;">==</div>
<div id="t23" class="t" style="left:439.05px;top:759.55px;font-family:'Liberation Sans', sans-serif;font-size:29.00px;font-weight:700;color:#201f1e;transform:scaleX(0.9491);transform-origin:0 0;">10 Resources</div>
<div id="t24" class="t" style="left:768.80px;top:759.55px;font-family:'Liberation Sans', sans-serif;font-size:29.00px;font-weight:400;color:#323130;letter-spacing:0.005px;">Insight Type</div>
<div id="t25" class="t" style="left:936.60px;top:759.55px;font-family:'Liberation Sans', sans-serif;font-size:29.00px;font-weight:400;color:#323130;letter-spacing:2.464px;">==</div>
<div id="t26" class="t" style="left:983.70px;top:759.55px;font-family:'Liberation Sans', sans-serif;font-size:29.00px;font-weight:700;color:#201f1e;letter-spacing:-0.293px;">All Types</div>
<div id="t27" class="t" style="left:2265.53px;top:848.95px;font-family:'Liberation Sans', sans-serif;font-size:29.00px;font-weight:400;color:#323130;transform:scaleX(0.9749);transform-origin:0 0;">Group By Type</div>
<div id="t28" class="t" style="left:60.82px;top:937.54px;font-family:'Liberation Sans', sans-serif;font-size:30.20px;font-weight:400;color:#323130;-webkit-text-stroke:0.91px #323130;transform:scaleX(0.9197);transform-origin:0 0;">Type</div>
<div id="t29" class="t" style="left:244.87px;top:937.54px;font-family:'Liberation Sans', sans-serif;font-size:30.20px;font-weight:400;color:#323130;-webkit-text-stroke:0.91px #323130;transform:scaleX(0.9251);transform-origin:0 0;">Peak Usage</div>
<div id="t30" class="t" style="left:506.82px;top:937.54px;font-family:'Liberation Sans', sans-serif;font-size:30.20px;font-weight:400;color:#323130;-webkit-text-stroke:0.91px #323130;transform:scaleX(0.9588);transform-origin:0 0;">Performance Issue</div>
<div id="t31" class="t" style="left:1023.85px;top:937.54px;font-family:'Liberation Sans', sans-serif;font-size:30.20px;font-weight:400;color:#323130;-webkit-text-stroke:0.91px #323130;letter-spacing:1.059px;">Method</div>
<div id="t32" class="t" style="left:1424.45px;top:937.54px;font-family:'Liberation Sans', sans-serif;font-size:30.20px;font-weight:400;color:#323130;-webkit-text-stroke:0.91px #323130;letter-spacing:-0.022px;">Subscription</div>
<div id="t33" class="t" style="left:1716.56px;top:937.54px;font-family:'Liberation Sans', sans-serif;font-size:30.20px;font-weight:400;color:#323130;-webkit-text-stroke:0.91px #323130;transform:scaleX(0.9302);transform-origin:0 0;">Role</div>
<div id="t34" class="t" style="left:2051.45px;top:937.54px;font-family:'Liberation Sans', sans-serif;font-size:30.20px;font-weight:400;color:#323130;-webkit-text-stroke:0.91px #323130;letter-spacing:0.110px;">Application Insights</div>
<div id="t35" class="t" style="left:113.45px;top:1014.54px;font-family:'Liberation Sans', sans-serif;font-size:30.20px;font-weight:400;color:#323130;-webkit-text-stroke:0.91px #323130;letter-spacing:0.354px;">Memory</div>
<div id="t36" class="t" style="left:58.40px;top:1086.34px;font-family:'Liberation Sans', sans-serif;font-size:29.60px;font-weight:400;color:#323130;letter-spacing:0.225px;">Memory</div>
<div id="t37" class="t" style="left:246.59px;top:1086.34px;font-family:'Liberation Sans', sans-serif;font-size:29.60px;font-weight:400;color:#323130;transform:scaleX(0.9134);transform-origin:0 0;">74%</div>
<div id="t38" class="t" style="left:507.20px;top:1086.34px;font-family:'Liberation Sans', sans-serif;font-size:29.60px;font-weight:400;color:#0f3f7a;letter-spacing:-0.300px;width:497.8px;overflow:hidden;height:41.4px;line-height:41.4px;top:1065.62px;">`IEnumerable&lt;T&gt;.ToList()` Taking Too Much Memory</div>
<div id="t39" class="t" style="left:1024.30px;top:1086.34px;font-family:'Liberation Sans', sans-serif;font-size:29.60px;font-weight:400;color:#323130;letter-spacing:-0.300px;width:381.5px;overflow:hidden;height:41.4px;line-height:41.4px;top:1065.62px;">Store.Reviews.ReviewValidation.StringValidation</div>
<div id="t40" class="t" style="left:1424.90px;top:1086.34px;font-family:'Liberation Sans', sans-serif;font-size:29.60px;font-weight:400;color:#323130;letter-spacing:0.044px;">eShop-prod</div>
<div id="t41" class="t" style="left:1717.20px;top:1086.34px;font-family:'Liberation Sans', sans-serif;font-size:29.60px;font-weight:400;color:#323130;letter-spacing:0.260px;">eshop-frontend</div>
<div id="t42" class="t" style="left:2050.50px;top:1086.34px;font-family:'Liberation Sans', sans-serif;font-size:29.60px;font-weight:400;color:#0f3f7a;letter-spacing:-0.102px;">eShop-diag</div>
<div id="t43" class="t" style="left:58.40px;top:1157.94px;font-family:'Liberation Sans', sans-serif;font-size:29.60px;font-weight:400;color:#323130;letter-spacing:0.225px;">Memory</div>
<div id="t44" class="t" style="left:246.59px;top:1157.94px;font-family:'Liberation Sans', sans-serif;font-size:29.60px;font-weight:400;color:#323130;transform:scaleX(0.9134);transform-origin:0 0;">36%</div>
<div id="t45" class="t" style="left:507.20px;top:1157.94px;font-family:'Liberation Sans', sans-serif;font-size:29.60px;font-weight:400;color:#2a6dcc;letter-spacing:-0.300px;width:497.8px;overflow:hidden;height:41.4px;line-height:41.4px;top:1137.22px;">`IEnumerable&lt;T&gt;.ToList()` Taking Too Much Memory</div>
<div id="t46" class="t" style="left:1023.30px;top:1157.94px;font-family:'Liberation Sans', sans-serif;font-size:29.60px;font-weight:400;color:#323130;letter-spacing:-0.300px;width:381.5px;overflow:hidden;height:41.4px;line-height:41.4px;top:1137.22px;">MvcMusicStore.Controllers.StoreController.Browse</div>
<div id="t47" class="t" style="left:1423.99px;top:1157.94px;font-family:'Liberation Sans', sans-serif;font-size:29.60px;font-weight:400;color:#323130;transform:scaleX(0.9564);transform-origin:0 0;">MusicStore-UAT</div>
<div id="t48" class="t" style="left:1717.24px;top:1157.94px;font-family:'Liberation Sans', sans-serif;font-size:29.60px;font-weight:400;color:#323130;transform:scaleX(0.9643);transform-origin:0 0;">mvcmusicstore01</div>
<div id="t49" class="t" style="left:2049.55px;top:1157.94px;font-family:'Liberation Sans', sans-serif;font-size:29.60px;font-weight:400;color:#2a6dcc;transform:scaleX(0.9733);transform-origin:0 0;">MvcMusicStore01</div>
<div id="t50" class="t" style="left:58.40px;top:1229.54px;font-family:'Liberation Sans', sans-serif;font-size:29.60px;font-weight:400;color:#323130;letter-spacing:0.225px;">Memory</div>
<div id="t51" class="t" style="left:246.59px;top:1229.54px;font-family:'Liberation Sans', sans-serif;font-size:29.60px;font-weight:400;color:#323130;transform:scaleX(0.9134);transform-origin:0 0;">36%</div>
<div id="t52" class="t" style="left:506.20px;top:1229.54px;font-family:'Liberation Sans', sans-serif;font-size:29.60px;font-weight:400;color:#2a6dcc;letter-spacing:-0.300px;width:497.8px;overflow:hidden;height:41.4px;line-height:41.4px;top:1208.82px;">Excessive allocations due to String.Ctor</div>
<div id="t53" class="t" style="left:1023.30px;top:1229.54px;font-family:'Liberation Sans', sans-serif;font-size:29.60px;font-weight:400;color:#323130;letter-spacing:-0.300px;width:381.5px;overflow:hidden;height:41.4px;line-height:41.4px;top:1208.82px;">ReviewHelper.&lt;LoadDisallowedWords&gt;b__0</div>
<div id="t54" class="t" style="left:1424.90px;top:1229.54px;font-family:'Liberation Sans', sans-serif;font-size:29.60px;font-weight:400;color:#323130;letter-spacing:0.044px;">eShop-prod</div>
<div id="t55" class="t" style="left:1717.20px;top:1229.54px;font-family:'Liberation Sans', sans-serif;font-size:29.60px;font-weight:400;color:#323130;letter-spacing:0.260px;">eshop-frontend</div>
<div id="t56" class="t" style="left:2050.50px;top:1229.54px;font-family:'Liberation Sans', sans-serif;font-size:29.60px;font-weight:400;color:#2a6dcc;letter-spacing:-0.102px;">eShop-diag</div>
<div id="t57" class="t" style="left:58.40px;top:1301.14px;font-family:'Liberation Sans', sans-serif;font-size:29.60px;font-weight:400;color:#323130;letter-spacing:0.225px;">Memory</div>
<div id="t58" class="t" style="left:246.59px;top:1301.14px;font-family:'Liberation Sans', sans-serif;font-size:29.60px;font-weight:400;color:#323130;transform:scaleX(0.9134);transform-origin:0 0;">34%</div>
<div id="t59" class="t" style="left:506.20px;top:1301.14px;font-family:'Liberation Sans', sans-serif;font-size:29.60px;font-weight:400;color:#2a6dcc;letter-spacing:-0.300px;width:497.8px;overflow:hidden;height:41.4px;line-height:41.4px;top:1280.42px;">Excessive allocations due to InternalSetValue</div>
<div id="t60" class="t" style="left:1023.30px;top:1301.14px;font-family:'Liberation Sans', sans-serif;font-size:29.60px;font-weight:400;color:#323130;letter-spacing:-0.300px;width:381.5px;overflow:hidden;height:41.4px;line-height:41.4px;top:1280.42px;">FabrikamFiber.DAL.Data.CustomerRepository</div>
<div id="t61" class="t" style="left:1424.93px;top:1301.14px;font-family:'Liberation Sans', sans-serif;font-size:29.60px;font-weight:400;color:#323130;transform:scaleX(0.9697);transform-origin:0 0;">ContosoHotels-UAT</div>
<div id="t62" class="t" style="left:1716.20px;top:1301.14px;font-family:'Liberation Sans', sans-serif;font-size:29.60px;font-weight:400;color:#323130;letter-spacing:-0.280px;">Fabrikam-App</div>
<div id="t63" class="t" style="left:2050.52px;top:1301.14px;font-family:'Liberation Sans', sans-serif;font-size:29.60px;font-weight:400;color:#2a6dcc;transform:scaleX(0.9753);transform-origin:0 0;">CH1-RetailAppAI-Prepd</div>
<div id="t64" class="t" style="left:114.50px;top:1372.54px;font-family:'Liberation Sans', sans-serif;font-size:30.20px;font-weight:400;color:#323130;-webkit-text-stroke:0.91px #323130;transform:scaleX(0.9217);transform-origin:0 0;">CPU</div>
<div id="t65" class="t" style="left:59.54px;top:1444.34px;font-family:'Liberation Sans', sans-serif;font-size:29.60px;font-weight:400;color:#323130;transform:scaleX(0.8634);transform-origin:0 0;">CPU</div>
<div id="t66" class="t" style="left:245.65px;top:1444.34px;font-family:'Liberation Sans', sans-serif;font-size:29.60px;font-weight:400;color:#323130;transform:scaleX(0.9241);transform-origin:0 0;">10%</div>
<div id="t67" class="t" style="left:507.20px;top:1444.34px;font-family:'Liberation Sans', sans-serif;font-size:29.60px;font-weight:400;color:#2a6dcc;letter-spacing:-0.300px;width:497.8px;overflow:hidden;height:41.4px;line-height:41.4px;top:1423.62px;">`IEnumerable&lt;T&gt;.ToList()` Taking Too Much CPU</div>
<div id="t68" class="t" style="left:1024.30px;top:1444.34px;font-family:'Liberation Sans', sans-serif;font-size:29.60px;font-weight:400;color:#323130;letter-spacing:-0.300px;width:381.5px;overflow:hidden;height:41.4px;line-height:41.4px;top:1423.62px;">Store.Reviews.ReviewValidation.StringValidation</div>
<div id="t69" class="t" style="left:1424.96px;top:1444.34px;font-family:'Liberation Sans', sans-serif;font-size:29.60px;font-weight:400;color:#323130;transform:scaleX(0.9422);transform-origin:0 0;">eShop-UAT</div>
<div id="t70" class="t" style="left:1717.20px;top:1444.34px;font-family:'Liberation Sans', sans-serif;font-size:29.60px;font-weight:400;color:#323130;letter-spacing:0.260px;">eshop-frontend</div>
<div id="t71" class="t" style="left:2050.50px;top:1444.34px;font-family:'Liberation Sans', sans-serif;font-size:29.60px;font-weight:400;color:#2a6dcc;letter-spacing:-0.102px;">eShop-diag</div>
<div id="t72" class="t" style="left:59.54px;top:1515.94px;font-family:'Liberation Sans', sans-serif;font-size:29.60px;font-weight:400;color:#323130;transform:scaleX(0.8634);transform-origin:0 0;">CPU</div>
<div id="t73" class="t" style="left:246.60px;top:1515.94px;font-family:'Liberation Sans', sans-serif;font-size:29.60px;font-weight:400;color:#323130;transform:scaleX(0.8996);transform-origin:0 0;">3.8%</div>
<div id="t74" class="t" style="left:507.20px;top:1515.94px;font-family:'Liberation Sans', sans-serif;font-size:29.60px;font-weight:400;color:#2a6dcc;letter-spacing:-0.300px;width:497.8px;overflow:hidden;height:41.4px;line-height:41.4px;top:1495.22px;">String.Ctor is causing high CPU usage</div>
<div id="t75" class="t" style="left:1023.30px;top:1515.94px;font-family:'Liberation Sans', sans-serif;font-size:29.60px;font-weight:400;color:#323130;letter-spacing:-0.300px;width:381.5px;overflow:hidden;height:41.4px;line-height:41.4px;top:1495.22px;">ReviewHelper.&lt;LoadDisallowedWords&gt;b__0</div>
<div id="t76" class="t" style="left:1424.90px;top:1515.94px;font-family:'Liberation Sans', sans-serif;font-size:29.60px;font-weight:400;color:#323130;letter-spacing:0.044px;">eShop-prod</div>
<div id="t77" class="t" style="left:1717.20px;top:1515.94px;font-family:'Liberation Sans', sans-serif;font-size:29.60px;font-weight:400;color:#323130;letter-spacing:0.260px;">eshop-frontend</div>
<div id="t78" class="t" style="left:2050.50px;top:1515.94px;font-family:'Liberation Sans', sans-serif;font-size:29.60px;font-weight:400;color:#2a6dcc;letter-spacing:-0.102px;">eShop-diag</div>
<div id="t79" class="t" style="left:59.54px;top:1587.54px;font-family:'Liberation Sans', sans-serif;font-size:29.60px;font-weight:400;color:#323130;transform:scaleX(0.8634);transform-origin:0 0;">CPU</div>
<div id="t80" class="t" style="left:246.60px;top:1587.54px;font-family:'Liberation Sans', sans-serif;font-size:29.60px;font-weight:400;color:#323130;transform:scaleX(0.8996);transform-origin:0 0;">3.8%</div>
<div id="t81" class="t" style="left:507.20px;top:1587.54px;font-family:'Liberation Sans', sans-serif;font-size:29.60px;font-weight:400;color:#2a6dcc;letter-spacing:-0.300px;width:497.8px;overflow:hidden;height:41.4px;line-height:41.4px;top:1566.82px;">String.ReplaceCore is causing high CPU usage</div>
<div id="t82" class="t" style="left:1024.30px;top:1587.54px;font-family:'Liberation Sans', sans-serif;font-size:29.60px;font-weight:400;color:#323130;letter-spacing:-0.300px;width:381.5px;overflow:hidden;height:41.4px;line-height:41.4px;top:1566.82px;">Store.Reviews.ReviewValidation.StringValidation</div>
<div id="t83" class="t" style="left:1424.90px;top:1587.54px;font-family:'Liberation Sans', sans-serif;font-size:29.60px;font-weight:400;color:#323130;letter-spacing:0.044px;">eShop-prod</div>
<div id="t84" class="t" style="left:1717.20px;top:1587.54px;font-family:'Liberation Sans', sans-serif;font-size:29.60px;font-weight:400;color:#323130;letter-spacing:0.260px;">eshop-frontend</div>
<div id="t85" class="t" style="left:2050.50px;top:1587.54px;font-family:'Liberation Sans', sans-serif;font-size:29.60px;font-weight:400;color:#2a6dcc;letter-spacing:-0.102px;">eShop-diag</div>
<div id="t86" class="t" style="left:59.54px;top:1659.14px;font-family:'Liberation Sans', sans-serif;font-size:29.60px;font-weight:400;color:#323130;transform:scaleX(0.8634);transform-origin:0 0;">CPU</div>
<div id="t87" class="t" style="left:246.60px;top:1659.14px;font-family:'Liberation Sans', sans-serif;font-size:29.60px;font-weight:400;color:#323130;transform:scaleX(0.8996);transform-origin:0 0;">3.4%</div>
<div id="t88" class="t" style="left:507.20px;top:1659.14px;font-family:'Liberation Sans', sans-serif;font-size:29.60px;font-weight:400;color:#2a6dcc;letter-spacing:-0.300px;width:497.8px;overflow:hidden;height:41.4px;line-height:41.4px;top:1638.42px;">Garbage Collection Showing Up in CPU</div>
<div id="t89" class="t" style="left:1023.30px;top:1659.14px;font-family:'Liberation Sans', sans-serif;font-size:29.60px;font-weight:400;color:#323130;letter-spacing:-0.300px;width:381.5px;overflow:hidden;height:41.4px;line-height:41.4px;top:1638.42px;">ReviewHelper.&lt;LoadDisallowedWords&gt;b__0</div>
<div id="t90" class="t" style="left:1424.96px;top:1659.14px;font-family:'Liberation Sans', sans-serif;font-size:29.60px;font-weight:400;color:#323130;transform:scaleX(0.9422);transform-origin:0 0;">eShop-UAT</div>
<div id="t91" class="t" style="left:1717.20px;top:1659.14px;font-family:'Liberation Sans', sans-serif;font-size:29.60px;font-weight:400;color:#323130;letter-spacing:0.260px;">eshop-frontend</div>
<div id="t92" class="t" style="left:2050.50px;top:1659.14px;font-family:'Liberation Sans', sans-serif;font-size:29.60px;font-weight:400;color:#2a6dcc;letter-spacing:-0.102px;">eShop-diag</div>
<div id="t93" class="t" style="left:59.54px;top:1730.74px;font-family:'Liberation Sans', sans-serif;font-size:29.60px;font-weight:400;color:#323130;transform:scaleX(0.8634);transform-origin:0 0;">CPU</div>
<div id="t94" class="t" style="left:246.60px;top:1730.74px;font-family:'Liberation Sans', sans-serif;font-size:29.60px;font-weight:400;color:#323130;transform:scaleX(0.8996);transform-origin:0 0;">2.5%</div>
<div id="t95" class="t" style="left:507.20px;top:1730.74px;font-family:'Liberation Sans', sans-serif;font-size:29.60px;font-weight:400;color:#2a6dcc;letter-spacing:-0.300px;width:497.8px;overflow:hidden;height:41.4px;line-height:41.4px;top:1710.02px;">QueryableExtensions.Include is causing high CPU usage</div>
<div id="t96" class="t" style="left:1023.30px;top:1730.74px;font-family:'Liberation Sans', sans-serif;font-size:29.60px;font-weight:400;color:#323130;letter-spacing:-0.300px;width:381.5px;overflow:hidden;height:41.4px;line-height:41.4px;top:1710.02px;">FabrikamFiber.DAL.Data.ServiceRepository</div>
<div id="t97" class="t" style="left:1424.90px;top:1730.74px;font-family:'Liberation Sans', sans-serif;font-size:29.60px;font-weight:400;color:#323130;letter-spacing:0.057px;">ContosoHotels-prod</div>
<div id="t98" class="t" style="left:1716.20px;top:1730.74px;font-family:'Liberation Sans', sans-serif;font-size:29.60px;font-weight:400;color:#323130;letter-spacing:-0.280px;">Fabrikam-App</div>
<div id="t99" class="t" style="left:2050.52px;top:1730.74px;font-family:'Liberation Sans', sans-serif;font-size:29.60px;font-weight:400;color:#2a6dcc;transform:scaleX(0.9753);transform-origin:0 0;">CH1-RetailAppAI-Prepd</div>
<div id="t100" class="t" style="left:52.60px;top:1819.79px;font-family:'Liberation Sans', sans-serif;font-size:28.60px;font-weight:400;color:#323130;letter-spacing:0.138px;">Showing 1 - 12 of 12 results.</div>
<div id="t101" class="t" style="left:2710.00px;top:492.95px;font-family:'Liberation Sans', sans-serif;font-size:29.00px;font-weight:400;color:#323130;transform:scaleX(0.9495);transform-origin:0 0;">Feedback</div>
<div id="t102" class="t" style="left:2921.89px;top:492.95px;font-family:'Liberation Sans', sans-serif;font-size:29.00px;font-weight:400;color:#323130;transform:scaleX(0.9557);transform-origin:0 0;">Dismiss</div>
<div id="t103" class="t" style="left:3109.50px;top:492.95px;font-family:'Liberation Sans', sans-serif;font-size:29.00px;font-weight:400;color:#323130;letter-spacing:-0.096px;">Create Work Item</div>
<div id="t104" class="t" style="left:3425.00px;top:492.95px;font-family:'Liberation Sans', sans-serif;font-size:29.00px;font-weight:400;color:#323130;letter-spacing:-0.264px;">Copy Details</div>
<div id="t105" class="t" style="left:2655.87px;top:598.69px;font-family:'Liberation Sans', sans-serif;font-size:31.50px;font-weight:400;color:#323130;-webkit-text-stroke:0.94px #323130;letter-spacing:0.733px;">Insight</div>
<div id="t106" class="t" style="left:2808.27px;top:598.69px;font-family:'Liberation Sans', sans-serif;font-size:31.50px;font-weight:400;color:#323130;transform:scaleX(0.9252);transform-origin:0 0;">Call Stack</div>
<div id="t107" class="t" style="left:2999.80px;top:598.69px;font-family:'Liberation Sans', sans-serif;font-size:31.50px;font-weight:400;color:#323130;letter-spacing:-0.235px;">Timeline</div>
<div id="t108" class="t" style="left:2655.98px;top:691.31px;font-family:'Liberation Sans', sans-serif;font-size:32.00px;font-weight:400;color:#323130;-webkit-text-stroke:0.96px #323130;letter-spacing:0.347px;">Description</div>
<div id="t109" class="t" style="left:2670.30px;top:776.32px;font-family:'Liberation Sans', sans-serif;font-size:28.80px;font-weight:400;color:#323130;letter-spacing:0.186px;">A lot of CPU or Memory is being spent in</div>
<div id="t110" class="t" style="left:3215.00px;top:780.18px;font-family:'Liberation Mono', monospace;font-size:23.00px;font-weight:400;color:#323130;-webkit-text-stroke:0.45px #323130;letter-spacing:-0.061px;">IEnumerable&lt;T&gt;.ToList()</div>
<div id="t111" class="t" style="left:3538.00px;top:776.32px;font-family:'Liberation Sans', sans-serif;font-size:28.80px;font-weight:400;color:#323130;">.</div>
<div id="t112" class="t" style="left:2656.98px;top:863.71px;font-family:'Liberation Sans', sans-serif;font-size:32.00px;font-weight:400;color:#323130;-webkit-text-stroke:0.96px #323130;letter-spacing:0.503px;">Current condition</div>
<div id="t113" class="t" style="left:2668.84px;top:949.92px;font-family:'Liberation Sans', sans-serif;font-size:28.80px;font-weight:400;color:#a4262c;transform:scaleX(0.9602);transform-origin:0 0;">74%</div>
<div id="t114" class="t" style="left:2733.10px;top:949.92px;font-family:'Liberation Sans', sans-serif;font-size:28.80px;font-weight:400;color:#323130;letter-spacing:0.274px;">of your Memory was spent in</div>
<div id="t115" class="t" style="left:3126.20px;top:953.78px;font-family:'Liberation Mono', monospace;font-size:23.00px;font-weight:400;color:#323130;-webkit-text-stroke:0.45px #323130;letter-spacing:-0.152px;">Enumerable.ToList</div>
<div id="t116" class="t" style="left:3373.90px;top:949.92px;font-family:'Liberation Sans', sans-serif;font-size:28.80px;font-weight:400;color:#323130;letter-spacing:0.485px;">called from</div>
<div id="t117" class="t" style="left:2679.10px;top:994.58px;font-family:'Liberation Mono', monospace;font-size:23.00px;font-weight:400;color:#323130;-webkit-text-stroke:0.45px #323130;letter-spacing:-0.167px;">Store.Reviews.ReviewValidation.StringValidation</div>
<div id="t118" class="t" style="left:3328.00px;top:990.72px;font-family:'Liberation Sans', sans-serif;font-size:28.80px;font-weight:400;color:#323130;letter-spacing:-0.043px;">. We expected this value</div>
<div id="t119" class="t" style="left:2669.80px;top:1032.32px;font-family:'Liberation Sans', sans-serif;font-size:28.80px;font-weight:400;color:#323130;letter-spacing:0.859px;">to be &lt;</div>
<div id="t120" class="t" style="left:2764.89px;top:1032.32px;font-family:'Liberation Sans', sans-serif;font-size:28.80px;font-weight:400;color:#6aae1f;transform:scaleX(0.9540);transform-origin:0 0;">13%</div>
<div id="t121" class="t" style="left:2820.00px;top:1032.32px;font-family:'Liberation Sans', sans-serif;font-size:28.80px;font-weight:400;color:#323130;">.</div>
<div id="t122" class="t" style="left:2655.00px;top:1097.82px;font-family:'Liberation Sans', sans-serif;font-size:28.80px;font-weight:400;color:#323130;letter-spacing:-0.140px;">Is this issue accurate/relevant?</div>
<div id="t123" class="t" style="left:2655.48px;top:1187.31px;font-family:'Liberation Sans', sans-serif;font-size:32.00px;font-weight:400;color:#323130;-webkit-text-stroke:0.96px #323130;letter-spacing:-0.054px;">Recommendations</div>
<div id="t124" class="t" style="left:2669.40px;top:1272.52px;font-family:'Liberation Sans', sans-serif;font-size:28.80px;font-weight:400;color:#323130;letter-spacing:-0.075px;">Consider using</div>
<div id="t125" class="t" style="left:2876.70px;top:1276.38px;font-family:'Liberation Mono', monospace;font-size:23.00px;font-weight:400;color:#323130;-webkit-text-stroke:0.45px #323130;letter-spacing:-0.136px;">List&lt;T&gt;</div>
<div id="t126" class="t" style="left:2991.50px;top:1272.52px;font-family:'Liberation Sans', sans-serif;font-size:28.80px;font-weight:400;color:#323130;letter-spacing:0.065px;">from the start to avoid expensive calls to ToList().</div>
<div id="t127" class="t" style="left:2670.40px;top:1312.72px;font-family:'Liberation Sans', sans-serif;font-size:28.80px;font-weight:400;color:#323130;letter-spacing:0.034px;">Also, verify that</div>
<div id="t128" class="t" style="left:2884.00px;top:1316.58px;font-family:'Liberation Mono', monospace;font-size:23.00px;font-weight:400;color:#323130;-webkit-text-stroke:0.45px #323130;">IEnumerable&lt;T&gt;.ToList()</div>
<div id="t129" class="t" style="left:3215.90px;top:1312.72px;font-family:'Liberation Sans', sans-serif;font-size:28.80px;font-weight:400;color:#323130;letter-spacing:0.245px;">isn&#x27;t being called for a single</div>
<div id="t130" class="t" style="left:2669.40px;top:1354.62px;font-family:'Liberation Sans', sans-serif;font-size:28.80px;font-weight:400;color:#323130;letter-spacing:0.194px;">enumeration, which can be accomplished simply by enumerating over the</div>
<div id="t131" class="t" style="left:2677.00px;top:1397.68px;font-family:'Liberation Mono', monospace;font-size:23.00px;font-weight:400;color:#323130;-webkit-text-stroke:0.45px #323130;letter-spacing:-0.125px;">IEnumerable&lt;T&gt;</div>
<div id="t132" class="t" style="left:2876.70px;top:1393.82px;font-family:'Liberation Sans', sans-serif;font-size:28.80px;font-weight:400;color:#323130;">.</div>
<div id="t133" class="t" style="left:2655.00px;top:1462.82px;font-family:'Liberation Sans', sans-serif;font-size:28.80px;font-weight:400;color:#323130;letter-spacing:0.241px;">Is this recommendation helpful?</div>
<div id="t134" class="t" style="left:2656.00px;top:1545.52px;font-family:'Liberation Sans', sans-serif;font-size:28.80px;font-weight:400;color:#323130;letter-spacing:0.027px;">Code fix suggestion available via Code Optimizations Extension (preview) for</div>
<div id="t135" class="t" style="left:2657.00px;top:1585.62px;font-family:'Liberation Sans', sans-serif;font-size:28.80px;font-weight:400;color:#323130;letter-spacing:0.075px;">Visual Studio or Visual Studio Code. GitHub Copilot required.</div>
<div id="t136" class="t" style="left:3446.90px;top:1585.62px;font-family:'Liberation Sans', sans-serif;font-size:28.80px;font-weight:400;color:#2a6dcc;letter-spacing:0.362px;">More here.</div>
</body></html>
